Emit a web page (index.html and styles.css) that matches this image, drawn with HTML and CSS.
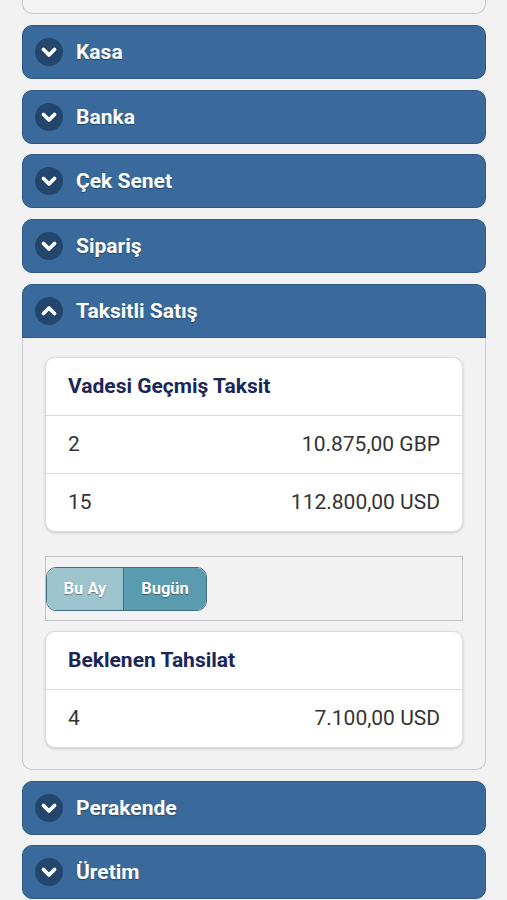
FILE: index.html
```html
<!DOCTYPE html>
<html>
<head>
    <meta charset="UTF-8">
    <title>Raporlar</title>
    <link rel="stylesheet" href="styles.css">
</head>
<body>
    <div class="page">
        <div class="tail"></div>

        <div class="section">
            <div class="section-head">
                <svg class="toggle-icon" viewBox="0 0 28 28"><circle cx="14" cy="14" r="14" fill="#24466d"/><polyline points="8.5,11.5 14,17 19.5,11.5" fill="none" stroke="#fff" stroke-width="3.8" stroke-linecap="round" stroke-linejoin="round"/></svg>
                <span>Kasa</span>
            </div>
        </div>

        <div class="section">
            <div class="section-head">
                <svg class="toggle-icon" viewBox="0 0 28 28"><circle cx="14" cy="14" r="14" fill="#24466d"/><polyline points="8.5,11.5 14,17 19.5,11.5" fill="none" stroke="#fff" stroke-width="3.8" stroke-linecap="round" stroke-linejoin="round"/></svg>
                <span>Banka</span>
            </div>
        </div>

        <div class="section">
            <div class="section-head">
                <svg class="toggle-icon" viewBox="0 0 28 28"><circle cx="14" cy="14" r="14" fill="#24466d"/><polyline points="8.5,11.5 14,17 19.5,11.5" fill="none" stroke="#fff" stroke-width="3.8" stroke-linecap="round" stroke-linejoin="round"/></svg>
                <span>Çek Senet</span>
            </div>
        </div>

        <div class="section">
            <div class="section-head">
                <svg class="toggle-icon" viewBox="0 0 28 28"><circle cx="14" cy="14" r="14" fill="#24466d"/><polyline points="8.5,11.5 14,17 19.5,11.5" fill="none" stroke="#fff" stroke-width="3.8" stroke-linecap="round" stroke-linejoin="round"/></svg>
                <span>Sipariş</span>
            </div>
        </div>

        <div class="section open">
            <div class="section-head">
                <svg class="toggle-icon" viewBox="0 0 28 28"><circle cx="14" cy="14" r="14" fill="#24466d"/><polyline points="8.5,16.5 14,11 19.5,16.5" fill="none" stroke="#fff" stroke-width="3.8" stroke-linecap="round" stroke-linejoin="round"/></svg>
                <span>Taksitli Satış</span>
            </div>
            <div class="section-body">
                <div class="card">
                    <div class="card-title">Vadesi Geçmiş Taksit</div>
                    <div class="card-row"><span>2</span><span>10.875,00 GBP</span></div>
                    <div class="card-row"><span>15</span><span>112.800,00 USD</span></div>
                </div>

                <div class="period-box">
                    <div class="period-group">
                        <button class="period-btn light">Bu Ay</button>
                        <button class="period-btn dark">Bugün</button>
                    </div>
                </div>

                <div class="card">
                    <div class="card-title">Beklenen Tahsilat</div>
                    <div class="card-row"><span>4</span><span>7.100,00 USD</span></div>
                </div>
            </div>
        </div>

        <div class="section">
            <div class="section-head">
                <svg class="toggle-icon" viewBox="0 0 28 28"><circle cx="14" cy="14" r="14" fill="#24466d"/><polyline points="8.5,11.5 14,17 19.5,11.5" fill="none" stroke="#fff" stroke-width="3.8" stroke-linecap="round" stroke-linejoin="round"/></svg>
                <span>Perakende</span>
            </div>
        </div>

        <div class="section">
            <div class="section-head">
                <svg class="toggle-icon" viewBox="0 0 28 28"><circle cx="14" cy="14" r="14" fill="#24466d"/><polyline points="8.5,11.5 14,17 19.5,11.5" fill="none" stroke="#fff" stroke-width="3.8" stroke-linecap="round" stroke-linejoin="round"/></svg>
                <span>Üretim</span>
            </div>
        </div>
    </div>
</body>
</html>
```

FILE: styles.css
```css
body {
    margin: 0;
    background-color: #f2f2f2;
    font-family: Roboto, "Liberation Sans", Arial, sans-serif;
    color: #333;
}

.page {
    display: flex;
    flex-direction: column;
    gap: 10.75px;
    padding: 0 21px 0 22px;
    height: 900px;
    overflow: hidden;
}

/* end of the section above, cut by the screen edge */
.tail {
    flex: none;
    height: 13px;
    border: 1px solid #c9c9c9;
    border-top: none;
    border-radius: 0 0 10px 10px;
    background-color: #f3f3f3;
}

.section {
    flex: none;
}

.section-head {
    display: flex;
    align-items: center;
    gap: 13px;
    height: 52px;
    padding: 0 12px;
    background-color: #396a9b;
    border: 1px solid #2d5884;
    border-radius: 10px;
    color: #fff;
    font-size: 21px;
    font-weight: bold;
    text-shadow: 0 1px 1px rgba(0, 0, 0, 0.35);
}

.toggle-icon {
    width: 28px;
    height: 28px;
    flex: none;
}

.section.open .section-head {
    border-radius: 10px 10px 0 0;
}

.section-body {
    display: flex;
    flex-direction: column;
    padding: 19px 22px 21px 22px;
    border: 1px solid #cbcbcb;
    border-top: none;
    border-radius: 0 0 10px 10px;
    background-color: #f2f2f2;
}

.card {
    background: white;
    border: 1px solid #dcdcdc;
    border-radius: 10px;
    box-shadow: 0 1px 3px rgba(0, 0, 0, 0.18);
    overflow: hidden;
}

.card-title {
    display: flex;
    align-items: center;
    height: 57px;
    padding: 0 22px;
    color: #1b2759;
    font-size: 21px;
    font-weight: bold;
}

.card-row {
    display: flex;
    justify-content: space-between;
    align-items: center;
    height: 57px;
    padding: 0 22px;
    border-top: 1px solid #dadada;
    font-size: 21px;
    color: #333;
}

.period-box {
    margin: 24px 0 10px 0;
    padding: 10px 0 9px 0;
    border: 1px solid #c4c4c4;
    background-color: #f2f2f2;
}

.period-group {
    display: inline-flex;
    border: 1px solid #40707f;
    border-radius: 10px;
    overflow: hidden;
}

.period-btn {
    height: 42px;
    border: none;
    margin: 0;
    padding: 0;
    color: #fff;
    font-family: inherit;
    font-size: 16.5px;
    font-weight: bold;
    text-shadow: 0 1px 1px rgba(0, 0, 0, 0.4);
}

.period-btn.light {
    width: 77px;
    background-color: #9dc4cc;
    border-right: 1px solid #40707f;
}

.period-btn.dark {
    width: 82px;
    background-color: #5b9bb0;
}
```
